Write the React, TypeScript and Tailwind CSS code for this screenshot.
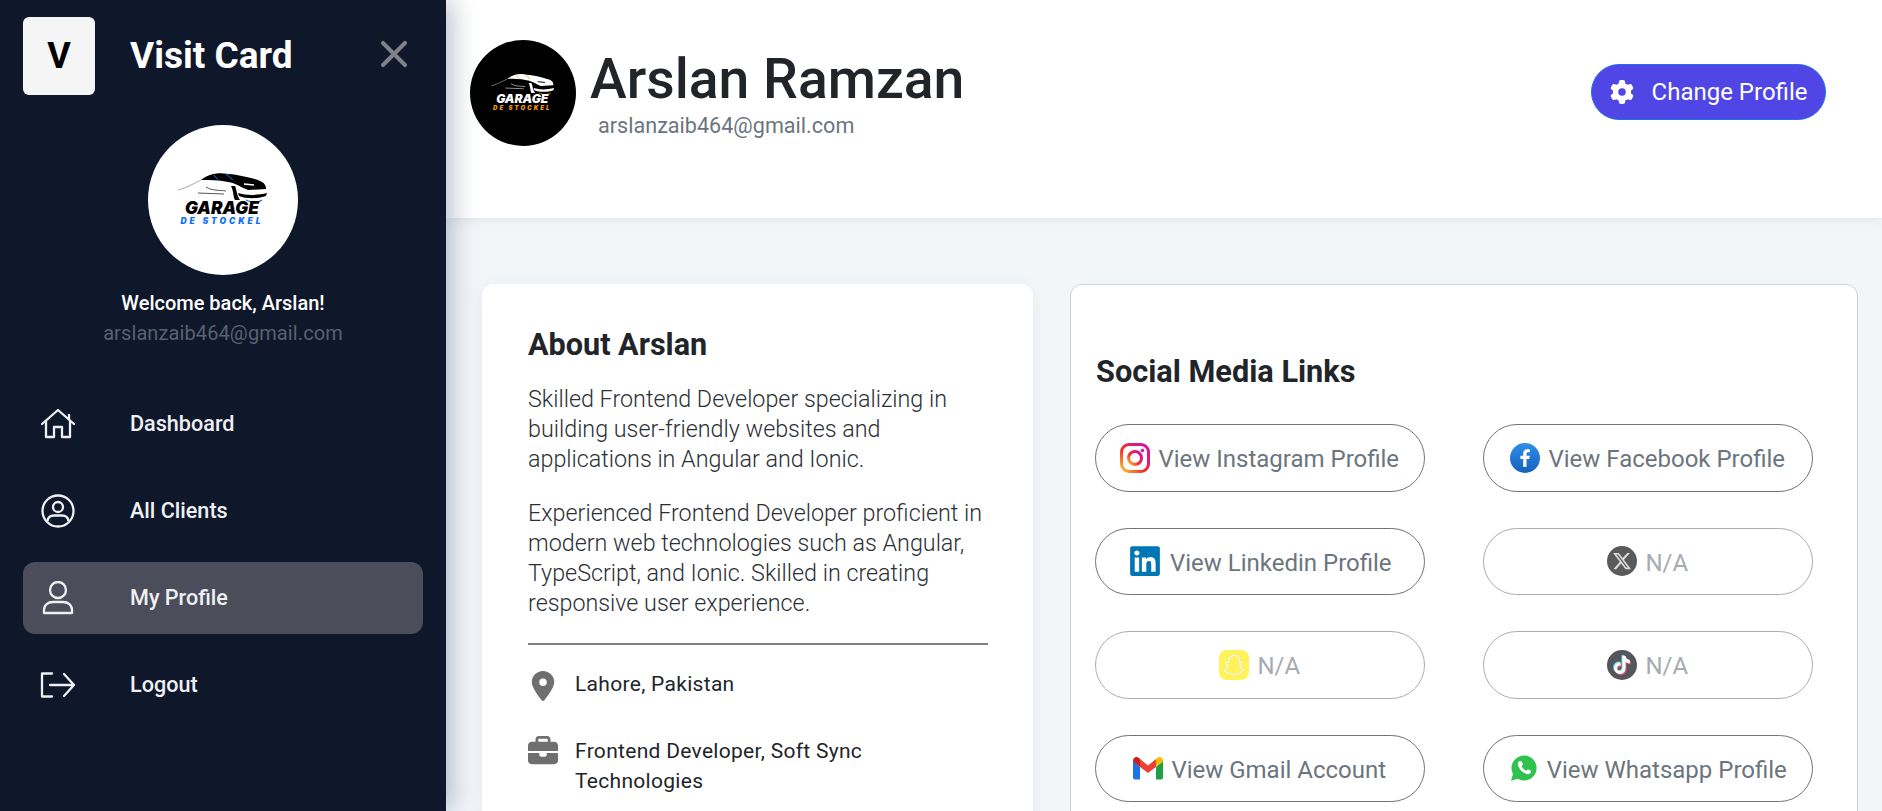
import {
  FaBriefcase,
  FaGear,
  FaLinkedin,
  FaLocationDot,
  FaSnapchat,
  FaTiktok,
  FaXTwitter,
} from "react-icons/fa6";
import { X } from "lucide-react";
import type { ReactNode } from "react";

function GarageLogo({ dark = false }: { dark?: boolean }) {
  const main = dark ? "#ffffff" : "#000000";
  const accent = dark ? "#f59e0b" : "#0f6fff";
  const paper = dark ? "#000000" : "#ffffff";
  return (
    <svg viewBox="0 0 150 150" className="w-full h-full">
      <path d="M30 65 C40 62 47 58 53 55" stroke={dark ? "#bbbbbb" : "#8a94a8"} strokeWidth="0.8" fill="none" />
      <path
        d="M53 55 C60 49 70 47 80 49 C92 50 105 53 112 56 C117 58 118 61 118 64 L100 65 C92 62 88 58 80 57 C70 55 62 55 53 55 Z"
        fill={main}
      />
      <path d="M66 50 L70 55 M78 49 L85 55" stroke={accent} strokeWidth="1" />
      <path d="M96 59 L106 60" stroke={paper} strokeWidth="1.4" />
      <path d="M58 62 C64 66 72 65 78 66 M50 68 L76 69" stroke={dark ? "#cccccc" : "#555555"} strokeWidth="1" fill="none" />
      <path d="M83 61 C86 67 85 72 87 75 L92 75 C89 71 89 66 87 61 Z" fill={main} />
      <path d="M90 68 C100 71 110 70 119 68 L118 71 C110 74 98 74 91 71 Z" fill={main} />
      <path d="M98 75 C104 78 110 78 114 75" stroke={accent} strokeWidth="1.2" fill="none" />
      <text
        x="74"
        y="89"
        textAnchor="middle"
        fontFamily="Inter, Roboto, sans-serif"
        fontWeight="900"
        fontStyle="italic"
        fontSize="17.2"
        fill={main}
      >
        GARAGE
      </text>
      <text
        x="74"
        y="98.5"
        textAnchor="middle"
        fontFamily="Inter, Roboto, sans-serif"
        fontWeight="900"
        fontStyle="italic"
        fontSize="8.5"
        letterSpacing="2.9"
        fill={accent}
      >
        DE STOCKEL
      </text>
    </svg>
  );
}

function HomeIcon() {
  return (
    <svg viewBox="0 0 34 30" className="w-[34px] h-[30px]" fill="none" stroke="currentColor" strokeWidth="2.3" strokeLinejoin="round" strokeLinecap="round">
      <path d="M1 15 L17 1 L33 15" />
      <path d="M28 6 V10" />
      <path d="M5 12 V28 H13 V18 H21 V28 H29 V12" />
    </svg>
  );
}

function ClientsIcon() {
  return (
    <svg viewBox="0 0 34 34" className="w-[34px] h-[34px]" fill="none" stroke="currentColor" strokeWidth="2.3">
      <circle cx="17" cy="17" r="15.5" />
      <circle cx="17" cy="13" r="5" />
      <path d="M6.5 27 C7 23 10 21.5 13 21.5 H21 C24 21.5 27 23 27.5 27" />
    </svg>
  );
}

function ProfileIcon() {
  return (
    <svg viewBox="0 0 32 34" className="w-8 h-[34px]" fill="none" stroke="currentColor" strokeWidth="2.3">
      <circle cx="16" cy="9" r="8" />
      <path d="M2 32 V29 C2 24 6 21 11 21 H21 C26 21 30 24 30 29 V32 Z" strokeLinejoin="round" />
    </svg>
  );
}

function LogoutIcon() {
  return (
    <svg viewBox="0 0 36 26" className="w-9 h-[26px]" fill="none" stroke="currentColor" strokeWidth="2.3" strokeLinecap="round" strokeLinejoin="round">
      <path d="M12 1.5 H2 V24.5 H12" />
      <path d="M10 13 H34 M24 2 L34 13 L24 24" />
    </svg>
  );
}

function InstagramIcon() {
  return (
    <svg viewBox="0 0 30 30" className="w-[30px] h-[30px]">
      <defs>
        <linearGradient id="ig" x1="0" y1="1" x2="1" y2="0">
          <stop offset="0" stopColor="#fdc82f" />
          <stop offset="0.4" stopColor="#f5302e" />
          <stop offset="0.75" stopColor="#e1167b" />
          <stop offset="1" stopColor="#c913b9" />
        </linearGradient>
      </defs>
      <rect x="1.5" y="1.5" width="27" height="27" rx="7.5" fill="none" stroke="url(#ig)" strokeWidth="3" />
      <circle cx="15" cy="15" r="6.5" fill="none" stroke="url(#ig)" strokeWidth="3" />
      <circle cx="22.5" cy="7.5" r="1.8" fill="#d6189c" />
    </svg>
  );
}

function FacebookIcon() {
  return (
    <svg viewBox="0 0 30 30" className="w-[30px] h-[30px]">
      <defs>
        <linearGradient id="fb" x1="0" y1="0" x2="0" y2="1">
          <stop offset="0" stopColor="#2f8fe6" />
          <stop offset="1" stopColor="#1560bd" />
        </linearGradient>
      </defs>
      <circle cx="15" cy="15" r="15" fill="url(#fb)" />
      <path d="M16.5 24 V16 H19.3 L19.8 12.8 H16.5 V10.9 C16.5 10 16.9 9.3 18.2 9.3 H19.9 V6.5 C19.3 6.4 18.3 6.3 17.3 6.3 C14.8 6.3 13.2 7.8 13.2 10.5 V12.8 H10.4 V16 H13.2 V24 Z" fill="#ffffff" />
    </svg>
  );
}

function GmailIcon() {
  return (
    <svg viewBox="0 0 30 24" className="w-[30px] h-6">
      <path d="M0 5 V21.5 C0 22.8 .9 23.5 2 23.5 H7 V11 Z" fill="#1a73e8" />
      <path d="M30 5 V21.5 C30 22.8 29.1 23.5 28 23.5 H23 V11 Z" fill="#1e9e4a" />
      <path d="M7 11 L15 17 L23 11 V3 L15 9.5 L7 3 Z" fill="#ea4335" />
      <path d="M0 5 C0 1.5 3.5 0 6 2 L7 3 V11 L0 5.5 Z" fill="#c5221f" />
      <path d="M30 5 C30 1.5 26.5 0 24 2 L23 3 V11 L30 5.5 Z" fill="#fbbc04" />
    </svg>
  );
}

function WhatsappIcon() {
  return (
    <svg viewBox="0 0 30 30" className="w-[30px] h-[30px]">
      <path d="M15 2.5 A12.5 12.5 0 1 1 8.8 25.8 L2 27.8 L4 21 A12.5 12.5 0 0 1 15 2.5 Z" fill="#2fc24f" />
      <path d="M10.5 8 C9 9 8.3 10.8 9.2 13 C10.5 16.5 13.5 19.5 17 20.8 C19.2 21.6 21 20.9 22 19.2 L21.9 17.7 L18.9 16.2 L17.4 17.7 C15.4 16.9 13.6 15.2 12.6 13 L14 11.5 L12.6 8.2 Z" fill="#ffffff" />
    </svg>
  );
}

function Badge({ children, className }: { children: ReactNode; className: string }) {
  return <div className={`w-[30px] h-[30px] flex items-center justify-center ${className}`}>{children}</div>;
}

function SocialButton({ icon, label, disabled }: { icon: ReactNode; label: string; disabled?: boolean }) {
  return (
    <div
      className={`h-[67.5px] rounded-full border flex items-center justify-center gap-2 text-2xl ${
        disabled ? "border-[#a9aeb4] text-[#a6abb2]" : "border-[#6c757d] text-[#6c757d]"
      }`}
    >
      {icon}
      <span className="mt-[3px]">{label}</span>
    </div>
  );
}

const navItems = [
  { label: "Dashboard", icon: <HomeIcon /> },
  { label: "All Clients", icon: <ClientsIcon /> },
  { label: "My Profile", icon: <ProfileIcon />, active: true },
  { label: "Logout", icon: <LogoutIcon /> },
];

export default function App() {
  return (
    <div className="flex h-screen overflow-hidden bg-[#f3f6f9] font-['Roboto',sans-serif]">
      <aside className="w-[446px] shrink-0 bg-[#0f172a] text-white flex flex-col px-[23px] pt-[17px] z-20 shadow-[6px_0_24px_rgba(100,116,139,0.45)]">
        <div className="flex items-center">
          <div className="w-[72px] h-[78px] rounded-md bg-[#f5f5f5] text-black flex items-center justify-center text-4xl font-bold">
            V
          </div>
          <h1 className="ml-[35px] text-[37px] font-bold">Visit Card</h1>
          <X className="ml-auto mr-[7px] -mt-[4px] text-[#80828a]" size={44} strokeWidth={2.2} />
        </div>

        <div className="flex flex-col items-center mt-[30px]">
          <div className="w-[150px] h-[150px] rounded-full bg-white overflow-hidden">
            <GarageLogo />
          </div>
          <p className="mt-[14px] text-xl font-medium leading-7">Welcome back, Arslan!</p>
          <p className="mt-[2px] text-xl leading-7 tracking-[0.1px] text-[#596170]">arslanzaib464@gmail.com</p>
        </div>

        <nav className="mt-[41px] flex flex-col gap-[15px]">
          {navItems.map((item) => (
            <div
              key={item.label}
              className={`h-[72px] rounded-xl flex items-center ${item.active ? "bg-[#4b4d5a]" : ""}`}
            >
              <div className="w-[53px] flex justify-end">
                <div className="w-[36px] flex justify-center text-[#eef0f3]">{item.icon}</div>
              </div>
              <span className="ml-[54px] text-[21.6px] font-medium text-[#eef0f3]">{item.label}</span>
            </div>
          ))}
        </nav>
      </aside>

      <main className="flex-1 flex flex-col min-w-0">
        <header className="h-[218px] shrink-0 bg-white flex items-start pl-6 pr-[56px] pt-10 shadow-[0_2px_10px_rgba(100,116,139,0.12)] z-10">
          <div className="w-[106px] h-[106px] rounded-full bg-black overflow-hidden shrink-0">
            <GarageLogo dark />
          </div>
          <div className="ml-[14px] flex-1">
            <h2 className="text-[55.3px] leading-[56px] mt-3 font-medium text-[#212529]">Arslan Ramzan</h2>
            <p className="ml-2 mt-[2px] text-[21.6px] text-[#6c757d]">arslanzaib464@gmail.com</p>
          </div>
          <button className="mt-6 w-[235px] h-[56px] rounded-full bg-[#4f46e5] border border-[#1d6ff2] text-white text-2xl flex items-center justify-center gap-[18px]">
            <FaGear size={24} />
            <span>Change Profile</span>
          </button>
        </header>

        <div className="flex-1 min-h-0 flex gap-[37px] pl-9 pr-6 pt-[66px] overflow-hidden">
          <section className="w-[551px] shrink-0 h-[800px] bg-white rounded-xl pl-[46px] pr-[45px] pt-[40px] shadow-[0_4px_16px_rgba(100,116,139,0.1)]">
            <h3 className="text-[30.6px] font-bold leading-[42px] text-[#212529]">About Arslan</h3>
            <div className="mt-[18px] text-[23.3px] leading-[30px] font-light text-[#2b3035]">
              <p>Skilled Frontend Developer specializing in building user-friendly websites and applications in Angular and Ionic.</p>
              <p className="mt-[24px]">
                Experienced Frontend Developer proficient in modern web technologies such as Angular, TypeScript, and Ionic. Skilled in creating responsive user experience.
              </p>
            </div>
            <hr className="mt-[25px] border-t-2 border-[#808080]" />
            <div className="mt-[26px] flex gap-[17px] text-[21px] leading-[30px] text-[#212529] tracking-[0.3px]">
              <div className="w-[30px] h-[30px] flex justify-center items-center text-[#6f6f6f] shrink-0">
                <FaLocationDot size={30} />
              </div>
              <p className="-mt-[2px]">Lahore, Pakistan</p>
            </div>
            <div className="mt-[35px] flex gap-[17px] text-[21px] leading-[30px] text-[#212529] tracking-[0.3px]">
              <div className="w-[30px] h-[30px] flex justify-center items-center text-[#6f6f6f] shrink-0">
                <FaBriefcase size={30} />
              </div>
              <p>
                Frontend Developer, Soft Sync
                <br />
                Technologies
              </p>
            </div>
          </section>

          <section className="flex-1 h-[800px] bg-white rounded-xl border border-[#cfd2d6] px-6 pt-[66px]">
            <h3 className="ml-px text-[30.7px] font-bold leading-[42px] text-[#212529]">Social Media Links</h3>
            <div className="mt-[31px] w-[717.5px] grid grid-cols-[329.5px_329.5px] gap-x-[58.5px] gap-y-9">
              <SocialButton icon={<InstagramIcon />} label="View Instagram Profile" />
              <SocialButton icon={<FacebookIcon />} label="View Facebook Profile" />
              <SocialButton icon={<FaLinkedin size={34} className="text-[#0077b5]" />} label="View Linkedin Profile" />
              <SocialButton
                disabled
                icon={
                  <Badge className="rounded-full bg-[#5a5a5a]">
                    <FaXTwitter size={20} className="text-[#dddddd]" />
                  </Badge>
                }
                label="N/A"
              />
              <SocialButton
                disabled
                icon={
                  <Badge className="rounded-lg bg-[#fff35a]">
                    <FaSnapchat size={22} className="text-white" stroke="#b8b8a8" strokeWidth={4} />
                  </Badge>
                }
                label="N/A"
              />
              <SocialButton
                disabled
                icon={
                  <Badge className="rounded-full bg-[#55555c]">
                    <FaTiktok
                      size={18}
                      className="text-white [filter:drop-shadow(1px_1px_0_#ee4d6a)_drop-shadow(-1px_-1px_0_#62e3ec)]"
                    />
                  </Badge>
                }
                label="N/A"
              />
              <SocialButton icon={<GmailIcon />} label="View Gmail Account" />
              <SocialButton icon={<WhatsappIcon />} label="View Whatsapp Profile" />
            </div>
          </section>
        </div>
      </main>
    </div>
  );
}
